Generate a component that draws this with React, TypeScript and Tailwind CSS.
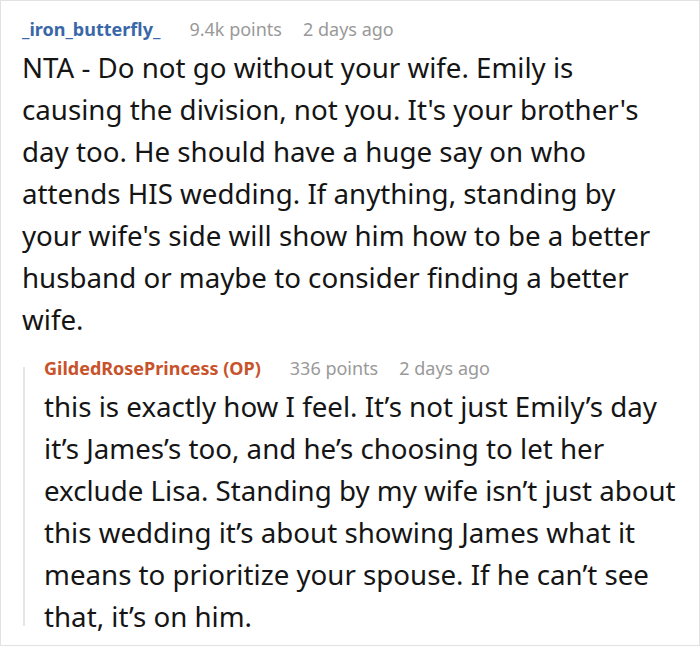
import React from 'react';

const comment = [
  'NTA - Do not go without your wife. Emily is',
  "causing the division, not you. It's your brother's",
  'day too. He should have a huge say on who',
  'attends HIS wedding. If anything, standing by',
  "your wife's side will show him how to be a better",
  'husband or maybe to consider finding a better',
  'wife.',
];

const reply = [
  'this is exactly how I feel. It’s not just Emily’s day',
  'it’s James’s too, and he’s choosing to let her',
  'exclude Lisa. Standing by my wife isn’t just about',
  'this wedding it’s about showing James what it',
  'means to prioritize your spouse. If he can’t see',
  'that, it’s on him.',
];

const Meta = ({ name, color, points }: { name: string; color: string; points: string }) => (
  <div className="flex items-baseline text-[18px] leading-[28px] whitespace-nowrap">
    <span className={`font-bold ${color}`}>{name}</span>
    <span className="ml-[29px] text-[#999999]">{points}</span>
    <span className="ml-[21px] text-[#999999]">2 days ago</span>
  </div>
);

const App: React.FC = () => {
  return (
    <div className="w-[700px] h-[646px] bg-white border border-[#e2e2e2] overflow-hidden" style={{ fontFamily: '"Noto Sans", sans-serif' }}>
      <div className="pl-[21px] pt-[14px]">
        <Meta name="_iron_butterfly_" color="text-[#3a67a8]" points="9.4k points" />
        <div className="mt-[3px] text-[27.7px] leading-[42px] text-[#151515]">
          {comment.map((line) => (
            <div key={line} className="whitespace-nowrap">{line}</div>
          ))}
        </div>

        <div className="mt-[14px] flex">
          <div className="ml-[1px] mt-[13px] mb-[11px] w-[2px] bg-[#e6e6e6]" />
          <div className="pl-[19px]">
            <Meta name="GildedRosePrincess (OP)" color="text-[#c8522a]" points="336 points" />
            <div className="mt-[3px] text-[27.7px] leading-[42px] text-[#151515]">
              {reply.map((line) => (
                <div key={line} className="whitespace-nowrap">{line}</div>
              ))}
            </div>
          </div>
        </div>
      </div>
    </div>
  );
};

export default App;
